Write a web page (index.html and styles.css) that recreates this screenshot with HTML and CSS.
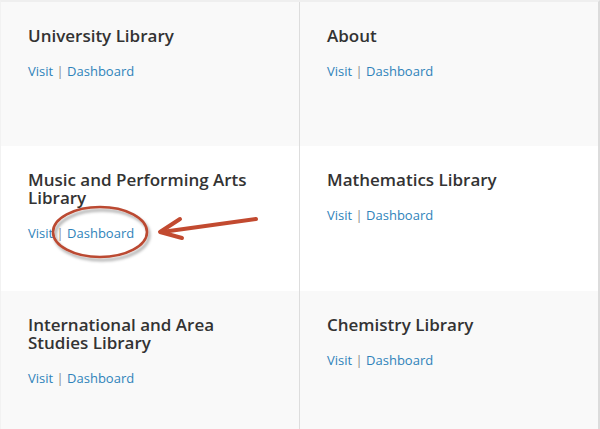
FILE: index.html
```html
<!DOCTYPE html>
<html lang="en">
<head>
<meta charset="utf-8">
<title>Sites</title>
<link rel="stylesheet" href="styles.css">
</head>
<body>
<div class="page">
  <div class="grid">
    <div class="cell shade">
      <h2 class="title">University Library</h2>
      <p class="links"><a href="#">Visit</a> <span class="sep">|</span> <a href="#">Dashboard</a></p>
    </div>
    <div class="cell shade">
      <h2 class="title">About</h2>
      <p class="links"><a href="#">Visit</a> <span class="sep">|</span> <a href="#">Dashboard</a></p>
    </div>
    <div class="cell">
      <h2 class="title">Music and Performing Arts Library</h2>
      <p class="links"><a href="#">Visit</a> <span class="sep">|</span> <a href="#">Dashboard</a></p>
    </div>
    <div class="cell">
      <h2 class="title">Mathematics Library</h2>
      <p class="links"><a href="#">Visit</a> <span class="sep">|</span> <a href="#">Dashboard</a></p>
    </div>
    <div class="cell shade">
      <h2 class="title">International and Area Studies Library</h2>
      <p class="links"><a href="#">Visit</a> <span class="sep">|</span> <a href="#">Dashboard</a></p>
    </div>
    <div class="cell shade">
      <h2 class="title">Chemistry Library</h2>
      <p class="links"><a href="#">Visit</a> <span class="sep">|</span> <a href="#">Dashboard</a></p>
    </div>
  </div>
  <svg class="annotation" width="600" height="429" viewBox="0 0 600 429" aria-hidden="true">
    <defs>
      <filter id="sh" x="-20%" y="-30%" width="140%" height="160%">
        <feDropShadow dx="2" dy="3" stdDeviation="1.6" flood-color="#000" flood-opacity="0.35"/>
      </filter>
    </defs>
    <ellipse cx="100" cy="232" rx="47" ry="25" fill="none" stroke="#bb4a32" stroke-width="2.6" filter="url(#sh)"/>
    <g stroke="#c24a30" stroke-width="4" stroke-linecap="round" stroke-linejoin="round" fill="none">
      <path d="M256 219 L162 232"/>
      <path d="M180 219 L160 232 L182 238"/>
    </g>
  </svg>
</div>
</body>
</html>
```

FILE: styles.css
```css
html, body {
  margin: 0;
  padding: 0;
  background: #ffffff;
}

.page {
  position: relative;
  width: 600px;
  height: 429px;
  overflow: hidden;
  font-family: "Open Sans", "Noto Sans", sans-serif;
}

.grid {
  display: grid;
  grid-template-columns: 298px 298px;
  grid-template-rows: 144px 145px 140px;
  column-gap: 1px;
  background: #dddddd;
  border-top: 2px solid #efefef;
  border-left: 1px solid #f2f2f2;
  border-right: 2px solid #dcdcdc;
}

.cell {
  background: #ffffff;
  padding: 25px 20px 0 27px;
}

.cell.shade {
  background: #f9f9f9;
}

.title {
  margin: 0;
  max-width: 232px;
  font-size: 17px;
  line-height: 18px;
  font-weight: 600;
  color: #333333;
}

.links {
  margin: 16px 0 0;
  font-size: 13px;
  line-height: 20px;
  color: #888888;
}

.links a {
  color: #2f83ba;
  text-decoration: none;
}

.sep {
  color: #8a8a8a;
}

.annotation {
  position: absolute;
  left: 0;
  top: 0;
  pointer-events: none;
}
```
